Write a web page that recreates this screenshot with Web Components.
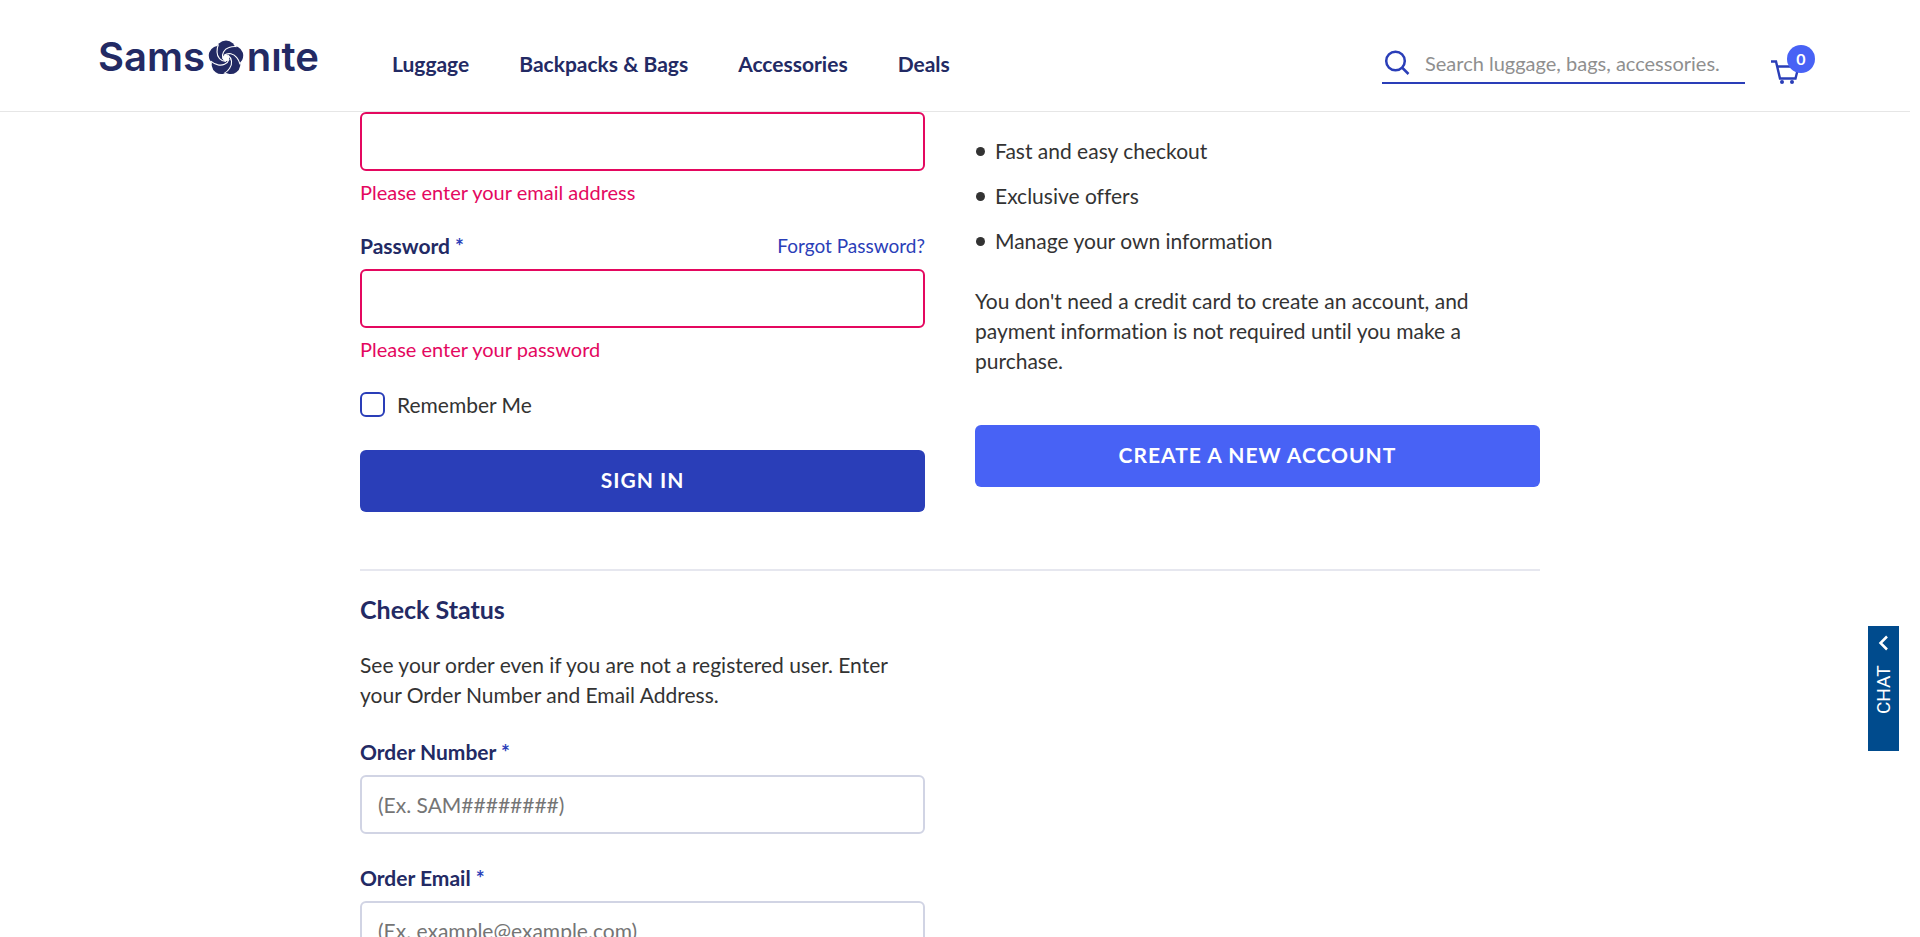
<!DOCTYPE html>
<html lang="en">
<head>
<meta charset="utf-8">
<title>Sign In | Samsonite</title>
<style>
  html { scrollbar-width: none; }
  body {
    --navy: #232a64;
    --blue: #2a3eb8;
    --bright: #4862f5;
    --error: #e4085f;
    --ink: #333;
    margin: 0;
    background: #fff;
    color: var(--ink);
    font: 21px/30px Lato, "Open Sans", sans-serif;
    font-variant-ligatures: none;
  }
</style>
</head>
<body>
<site-header></site-header>
<account-page></account-page>
<chat-tab></chat-tab>

<template id="site-header">
  <style>
    :host { display: block; margin-right: 10px; border-bottom: 1px solid #e6e6e6; }
    header { display: flex; align-items: center; height: 94px; padding: 17px 95px 0 98px; }
    nav { display: flex; gap: 50px; margin-left: 73px; }
    nav a { color: var(--navy); font-weight: 700; text-decoration: none; white-space: nowrap; }
    site-search { flex: 0 1 363px; margin-left: auto; }
    cart-link { margin-left: 26px; }
  </style>
  <header>
    <brand-logo></brand-logo>
    <nav aria-label="Main">
      <a href="#luggage">Luggage</a>
      <a href="#backpacks">Backpacks &amp; Bags</a>
      <a href="#accessories">Accessories</a>
      <a href="#deals">Deals</a>
    </nav>
    <site-search></site-search>
    <cart-link></cart-link>
  </header>
</template>

<template id="brand-logo">
  <style>
    :host { display: block; flex: none; }
    a { display: flex; justify-content: space-between; width: 221px; padding-bottom: 12px; color: var(--navy); font: 600 40px/34px Inter, "Open Sans", sans-serif; text-decoration: none; }
    svg { display: block; }
  </style>
  <a href="#home" aria-label="Samsonite">
    <span>Sams</span>
    <svg width="36" height="36" viewBox="-18 -18 36 36">
      <defs>
        <circle id="lobe" cx="0" cy="-8" r="9.600"/>
        <path id="cut" d="M-3.200 1C-4.800-4-1.800-8.800 3-10.400C5-11.200 7.500-11.600 10.500-11.400"/>
      </defs>
      <g fill="#232a64">
        <use href="#lobe"/><use href="#lobe" transform="rotate(72)"/><use href="#lobe" transform="rotate(144)"/>
        <use href="#lobe" transform="rotate(216)"/><use href="#lobe" transform="rotate(288)"/>
      </g>
      <circle r="3.200" fill="#fff"/>
      <g fill="none" stroke="#fff" stroke-width="1.100">
        <use href="#cut"/><use href="#cut" transform="rotate(72)"/><use href="#cut" transform="rotate(144)"/>
        <use href="#cut" transform="rotate(216)"/><use href="#cut" transform="rotate(288)"/>
      </g>
    </svg>
    <span>nıte</span>
  </a>
</template>

<template id="site-search">
  <style>
    :host { display: block; }
    form { display: flex; align-items: center; gap: 15px; height: 38px; border-bottom: 2px solid var(--blue); }
    button { flex: none; width: 28px; height: 28px; padding: 0; border: 0; background: none; }
    svg { display: block; }
    input { flex: 1; min-width: 0; padding: 0; border: 0; outline: 0; background: none; color: var(--ink); font: inherit; font-size: 20px; }
    input::placeholder { color: #8f8f8f; opacity: 1; }
  </style>
  <form role="search">
    <button type="button" aria-label="Search">
      <svg width="28" height="28" viewBox="0 0 28 28" fill="none" stroke="#2a3eb8" stroke-width="2.500">
        <circle cx="13.500" cy="12" r="9.300"/><path d="M20 18.500l6.500 6.500"/>
      </svg>
    </button>
    <input type="text" aria-label="Search" placeholder="Search luggage, bags, accessories.">
  </form>
</template>

<template id="cart-link">
  <style>
    :host { display: block; flex: none; }
    a { position: relative; display: block; width: 44px; height: 40px; color: #fff; text-decoration: none; }
    svg { display: block; }
    span { position: absolute; top: 1px; right: 0; width: 28px; border-radius: 14px; background: var(--bright); font-size: 16px; font-weight: 700; line-height: 28px; text-align: center; }
  </style>
  <a href="#cart" aria-label="Cart">
    <svg width="44" height="40" viewBox="0 0 44 40" fill="none" stroke="#2a3eb8" stroke-width="2.400">
      <path d="M0 17.500h5l4 17h15.500l3-12H6"/>
      <circle cx="11" cy="38" r="2" fill="#2a3eb8" stroke="none"/><circle cx="21" cy="38" r="2" fill="#2a3eb8" stroke="none"/>
    </svg>
    <span>0</span>
  </a>
</template>

<template id="account-page">
  <style>
    :host { display: block; padding: 0 20px 60px 0; }
    main { max-width: 1180px; margin: 0 auto; }
    .columns { display: grid; grid-template-columns: 1fr 1fr; column-gap: 50px; }
    form { display: flex; flex-direction: column; }
    form-field + form-field { margin-top: 27px; }
    .status form-field + form-field { margin-top: 29px; }
    check-option { margin: 31px 0 33px; }
    .join { padding-top: 24px; }
    ul { display: grid; gap: 15px; margin: 0 0 30px; padding: 0 0 0 1px; list-style: none; }
    li { display: flex; align-items: center; gap: 10px; }
    li::before { content: ""; width: 9px; height: 9px; border-radius: 50%; background: var(--ink); }
    p { margin: 0; }
    .join p { margin-bottom: 49px; }
    hr { height: 2px; margin: 57px 0 23px; border: 0; background: #e6e7ef; }
    h2 { margin: 0 0 26px; color: var(--navy); font-size: 25px; font-weight: 700; line-height: 30px; }
    .status p { margin-bottom: 27px; }
  </style>
  <main>
    <div class="columns">
      <form novalidate>
        <form-field type="email" name="Email Address" error="Please enter your email address"></form-field>
        <form-field type="password" label="Password" error="Please enter your password" link="Forgot Password?"></form-field>
        <check-option>Remember Me</check-option>
        <action-button>SIGN IN</action-button>
      </form>
      <section class="join">
        <ul>
          <li>Fast and easy checkout</li>
          <li>Exclusive offers</li>
          <li>Manage your own information</li>
        </ul>
        <p>You don't need a credit card to create an account, and payment information is not required until you make a purchase.</p>
        <action-button tone="bright">CREATE A NEW ACCOUNT</action-button>
      </section>
    </div>
    <hr>
    <div class="columns status">
      <section>
        <h2>Check Status</h2>
        <p>See your order even if you are not a registered user. Enter your Order Number and Email Address.</p>
        <form novalidate>
          <form-field type="text" label="Order Number" placeholder="(Ex. SAM########)"></form-field>
          <form-field type="email" label="Order Email" placeholder="(Ex. example@example.com)"></form-field>
        </form>
      </section>
    </div>
  </main>
</template>

<template id="form-field">
  <style>
    :host { display: block; }
    .head { display: flex; justify-content: space-between; margin-bottom: 8px; }
    label { color: var(--navy); font-weight: 700; }
    label span { color: var(--blue); }
    a { color: var(--blue); font-size: 19px; text-decoration: none; }
    input { display: block; box-sizing: border-box; width: 100%; height: 59px; padding: 0 16px; border: 2px solid #d1d4e4; border-radius: 6px; outline: 0; background: #fff; color: var(--ink); font: inherit; }
    input::placeholder { color: #757575; opacity: 1; }
    :host([error]) input { border-color: var(--error); }
    .error { margin: 9px 0 0; color: var(--error); font-size: 20px; line-height: 24px; }
  </style>
  <div class="head"><label for="control"><slot></slot> <span>*</span></label></div>
  <input id="control">
  <p class="error"></p>
</template>

<template id="check-option">
  <style>
    :host { display: block; }
    label { display: flex; align-items: center; gap: 12px; height: 25px; }
    input { appearance: none; box-sizing: border-box; width: 25px; height: 25px; margin: 0; border: 2px solid var(--blue); border-radius: 6px; background: #fff; }
    input:checked { background: var(--blue); }
  </style>
  <label><input type="checkbox"><slot></slot></label>
</template>

<template id="action-button">
  <style>
    :host { display: block; }
    button { display: block; width: 100%; height: 62px; padding: 0 0 2px; border: 0; border-radius: 6px; background: var(--blue); color: #fff; font: inherit; font-weight: 700; letter-spacing: 1px; }
    :host([tone="bright"]) button { background: var(--bright); }
  </style>
  <button type="button"><slot></slot></button>
</template>

<template id="chat-tab">
  <style>
    :host { position: fixed; top: 626px; right: 21px; }
    button { display: flex; align-items: center; justify-content: flex-end; gap: 14px; width: 31px; height: 125px; padding: 9px 0; border: 0; background: #004b8d; color: #fff; font: 19px/31px Roboto, sans-serif; writing-mode: vertical-rl; transform: rotate(180deg); }
    svg { display: block; }
  </style>
  <button type="button">CHAT
    <svg width="12" height="16" viewBox="0 0 12 16" fill="none" stroke="#fff" stroke-width="2.500"><path d="M2 1.500L8.500 8L2 14.500"/></svg>
  </button>
</template>

<script>
  class TemplateElement extends HTMLElement {
    constructor() {
      super();
      this.attachShadow({ mode: 'open' })
        .append(document.getElementById(this.localName).content.cloneNode(true));
    }
  }

  class FormField extends TemplateElement {
    connectedCallback() {
      const find = selector => this.shadowRoot.querySelector(selector);
      const input = find('input');
      const head = find('.head');
      input.type = this.getAttribute('type');
      input.placeholder = this.getAttribute('placeholder') || '';
      if (this.hasAttribute('label')) {
        find('slot').replaceWith(this.getAttribute('label'));
      } else {
        head.remove();
        input.setAttribute('aria-label', this.getAttribute('name'));
      }
      if (this.hasAttribute('link')) {
        const link = document.createElement('a');
        link.href = '#forgot';
        link.textContent = this.getAttribute('link');
        head.append(link);
      }
      if (this.hasAttribute('error')) find('.error').textContent = this.getAttribute('error');
      else find('.error').remove();
    }
  }

  customElements.define('form-field', FormField);
  for (const name of ['brand-logo', 'site-search', 'cart-link', 'check-option', 'action-button', 'site-header', 'account-page', 'chat-tab']) {
    customElements.define(name, class extends TemplateElement {});
  }
</script>
</body>
</html>
